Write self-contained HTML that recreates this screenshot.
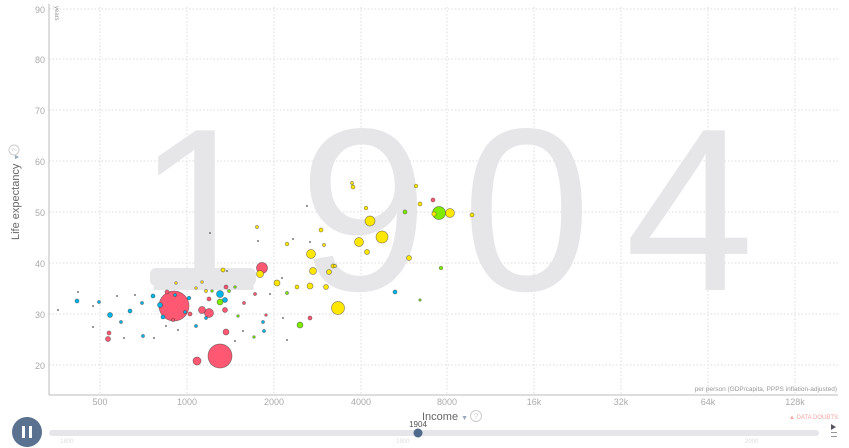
<!DOCTYPE html>
<html><head><meta charset="utf-8"><style>
html,body{margin:0;padding:0;background:#fff;width:849px;height:448px;overflow:hidden;font-family:"Liberation Sans",sans-serif}
</style></head><body>
<svg width="849" height="448" viewBox="0 0 849 448" xmlns="http://www.w3.org/2000/svg" font-family="Liberation Sans, sans-serif">
<g stroke="#ddd" stroke-dasharray="1.5,2" stroke-width="1">
<line x1="49" y1="9" x2="838" y2="9"/><line x1="49" y1="59" x2="838" y2="59"/><line x1="49" y1="110" x2="838" y2="110"/><line x1="49" y1="161" x2="838" y2="161"/><line x1="49" y1="212" x2="838" y2="212"/><line x1="49" y1="263" x2="838" y2="263"/><line x1="49" y1="314" x2="838" y2="314"/><line x1="49" y1="365" x2="838" y2="365"/>
<line x1="100" y1="7" x2="100" y2="395"/><line x1="187" y1="7" x2="187" y2="395"/><line x1="274" y1="7" x2="274" y2="395"/><line x1="361" y1="7" x2="361" y2="395"/><line x1="447" y1="7" x2="447" y2="395"/><line x1="534" y1="7" x2="534" y2="395"/><line x1="621" y1="7" x2="621" y2="395"/><line x1="708" y1="7" x2="708" y2="395"/><line x1="795" y1="7" x2="795" y2="395"/>
</g>
<text x="462" y="290" text-anchor="middle" font-size="232" fill="#e6e6e9" letter-spacing="34">1904</text>
<rect x="150" y="268" width="106" height="18" rx="6" fill="#e6e6e9"/>
<line x1="49" y1="4" x2="49" y2="395" stroke="#bbb"/>
<line x1="49" y1="395" x2="838" y2="395" stroke="#bbb"/>
<g fill="#aaa" font-size="9" text-anchor="end">
<text x="45" y="13">90</text><text x="45" y="63">80</text><text x="45" y="114">70</text><text x="45" y="165">60</text><text x="45" y="216">50</text><text x="45" y="267">40</text><text x="45" y="318">30</text><text x="45" y="369">20</text>
</g>
<text transform="translate(55,6) rotate(90)" font-size="6" fill="#999">years</text>
<g fill="#aaa" font-size="9" text-anchor="middle">
<text x="100" y="405">500</text><text x="187" y="405">1000</text><text x="274" y="405">2000</text><text x="361" y="405">4000</text><text x="447" y="405">8000</text><text x="534" y="405">16k</text><text x="621" y="405">32k</text><text x="708" y="405">64k</text><text x="795" y="405">128k</text>
</g>
<text x="837" y="391" text-anchor="end" font-size="6.5" fill="#999">per person (GDP/capita, PPPS inflation-adjusted)</text>
<text transform="translate(19,240) rotate(-90)" font-size="11" fill="#666">Life expectancy <tspan fill="#9ab" font-size="7">▼</tspan></text>
<circle cx="14" cy="150" r="5" fill="none" stroke="#ccc"/><text transform="translate(17,150) rotate(-90)" text-anchor="middle" font-size="7" fill="#ccc">?</text>
<text x="422" y="420" font-size="11" fill="#666">Income <tspan fill="#9ab" font-size="7">▼</tspan></text>
<circle cx="476" cy="416" r="5.5" fill="none" stroke="#ccc"/><text x="476" y="419" text-anchor="middle" font-size="8" fill="#ccc">?</text>
<text x="838" y="419" text-anchor="end" font-size="6" fill="#f4a4a4">▲ DATA DOUBTS</text>
<rect x="49" y="430" width="770" height="6" rx="3" fill="#e6e6ea"/>
<text x="418" y="427" text-anchor="middle" font-size="8" fill="#555">1904</text>
<circle cx="418" cy="433" r="4.5" fill="#4f6a8a"/>
<text x="60" y="443" font-size="6" fill="#ddd">1800</text><text x="396" y="443" font-size="6" fill="#ddd">1900</text><text x="745" y="443" font-size="6" fill="#ddd">2000</text>
<circle cx="27" cy="432" r="15" fill="#5a7290"/>
<rect x="22" y="426" width="3" height="12" fill="#fff"/><rect x="29" y="426" width="3" height="12" fill="#fff"/>
<path d="M831 424l5 3-5 3z" fill="#556"/><rect x="831" y="432" width="6" height="1" fill="#999"/><rect x="831" y="436" width="6" height="1" fill="#999"/>
<g stroke="#333" stroke-opacity="0.55" stroke-width="0.7">
<g fill="#ff5872">
<circle cx="174" cy="306" r="15"/><circle cx="220" cy="356" r="12"/><circle cx="262" cy="268" r="5.5"/><circle cx="209" cy="313" r="4.5"/><circle cx="202" cy="310" r="3.5"/><circle cx="197" cy="361" r="4"/><circle cx="226" cy="332" r="3"/><circle cx="225" cy="310" r="2.5"/><circle cx="108" cy="339" r="2.5"/><circle cx="109" cy="333" r="2"/><circle cx="167" cy="292" r="2"/><circle cx="190" cy="314" r="2"/><circle cx="209" cy="299" r="2"/><circle cx="226" cy="287" r="2"/><circle cx="310" cy="318" r="2"/><circle cx="255" cy="294" r="1.5"/><circle cx="173" cy="320" r="1.5"/><circle cx="433" cy="200" r="2"/><circle cx="266" cy="315" r="1.3"/><circle cx="244" cy="303" r="1.5"/>
</g>
<g fill="#00b5e9">
<circle cx="220" cy="294" r="3.5"/><circle cx="225" cy="300" r="2.5"/><circle cx="110" cy="315" r="2.5"/><circle cx="77" cy="301" r="2"/><circle cx="160" cy="305" r="2.5"/><circle cx="153" cy="296" r="2"/><circle cx="130" cy="311" r="2"/><circle cx="163" cy="317" r="2"/><circle cx="121" cy="322" r="1.5"/><circle cx="142" cy="303" r="1.5"/><circle cx="99" cy="302" r="1.5"/><circle cx="189" cy="298" r="1.8"/><circle cx="185" cy="312" r="1.5"/><circle cx="143" cy="336" r="1.5"/><circle cx="264" cy="331" r="1.5"/><circle cx="196" cy="326" r="1.5"/><circle cx="395" cy="292" r="2"/><circle cx="206" cy="318" r="1.5"/><circle cx="263" cy="322" r="1.5"/><circle cx="175" cy="295" r="1.5"/>
</g>
<g fill="#7feb00">
<circle cx="439" cy="213" r="6.5"/><circle cx="220" cy="302" r="3"/><circle cx="300" cy="325" r="3"/><circle cx="405" cy="212" r="2"/><circle cx="441" cy="268" r="1.8"/><circle cx="229" cy="291" r="1.5"/><circle cx="287" cy="293" r="1.5"/><circle cx="235" cy="287" r="1.3"/><circle cx="212" cy="291" r="1.3"/><circle cx="238" cy="316" r="1.3"/><circle cx="254" cy="337" r="1.3"/><circle cx="340" cy="308" r="1.5"/><circle cx="420" cy="300" r="1.2"/>
</g>
<g fill="#ffe700">
<circle cx="338" cy="308" r="6.5"/><circle cx="382" cy="237" r="6"/><circle cx="370" cy="221" r="5"/><circle cx="359" cy="242" r="4.5"/><circle cx="450" cy="213" r="4.5"/><circle cx="311" cy="254" r="4.5"/><circle cx="313" cy="271" r="3.5"/><circle cx="260" cy="274" r="3.5"/><circle cx="277" cy="283" r="3"/><circle cx="310" cy="286" r="3"/><circle cx="409" cy="258" r="2.5"/><circle cx="367" cy="252" r="2.5"/><circle cx="329" cy="272" r="2.5"/><circle cx="333" cy="266" r="2"/><circle cx="321" cy="230" r="2"/><circle cx="353" cy="187" r="2"/><circle cx="420" cy="204" r="2"/><circle cx="434" cy="214" r="2.2"/><circle cx="472" cy="215" r="2"/><circle cx="416" cy="186" r="1.8"/><circle cx="366" cy="208" r="1.8"/><circle cx="287" cy="244" r="1.8"/><circle cx="297" cy="287" r="2"/><circle cx="326" cy="287" r="2.5"/><circle cx="335" cy="266" r="1.5"/><circle cx="223" cy="270" r="2"/><circle cx="206" cy="291" r="1.5"/><circle cx="196" cy="288" r="1.3"/><circle cx="257" cy="227" r="1.5"/><circle cx="324" cy="245" r="1.5"/><circle cx="352" cy="183" r="1.5"/><circle cx="202" cy="282" r="1.3"/><circle cx="176" cy="283" r="1.3"/>
</g>
<g fill="#777" stroke="none">
<circle cx="58" cy="310" r="1"/><circle cx="78" cy="292" r="1"/><circle cx="93" cy="306" r="1"/><circle cx="117" cy="296" r="1"/><circle cx="124" cy="338" r="1"/><circle cx="154" cy="338" r="1"/><circle cx="135" cy="295" r="1"/><circle cx="166" cy="326" r="1"/><circle cx="210" cy="233" r="1"/><circle cx="258" cy="241" r="1"/><circle cx="293" cy="239" r="1"/><circle cx="307" cy="206" r="1"/><circle cx="310" cy="242" r="1"/><circle cx="283" cy="318" r="1"/><circle cx="287" cy="340" r="1"/><circle cx="227" cy="271" r="1"/><circle cx="282" cy="278" r="1"/><circle cx="235" cy="341" r="1"/><circle cx="243" cy="331" r="1"/><circle cx="270" cy="294" r="1"/><circle cx="178" cy="330" r="1"/><circle cx="93" cy="327" r="1"/>
</g>
</g>
</svg>
</body></html>
